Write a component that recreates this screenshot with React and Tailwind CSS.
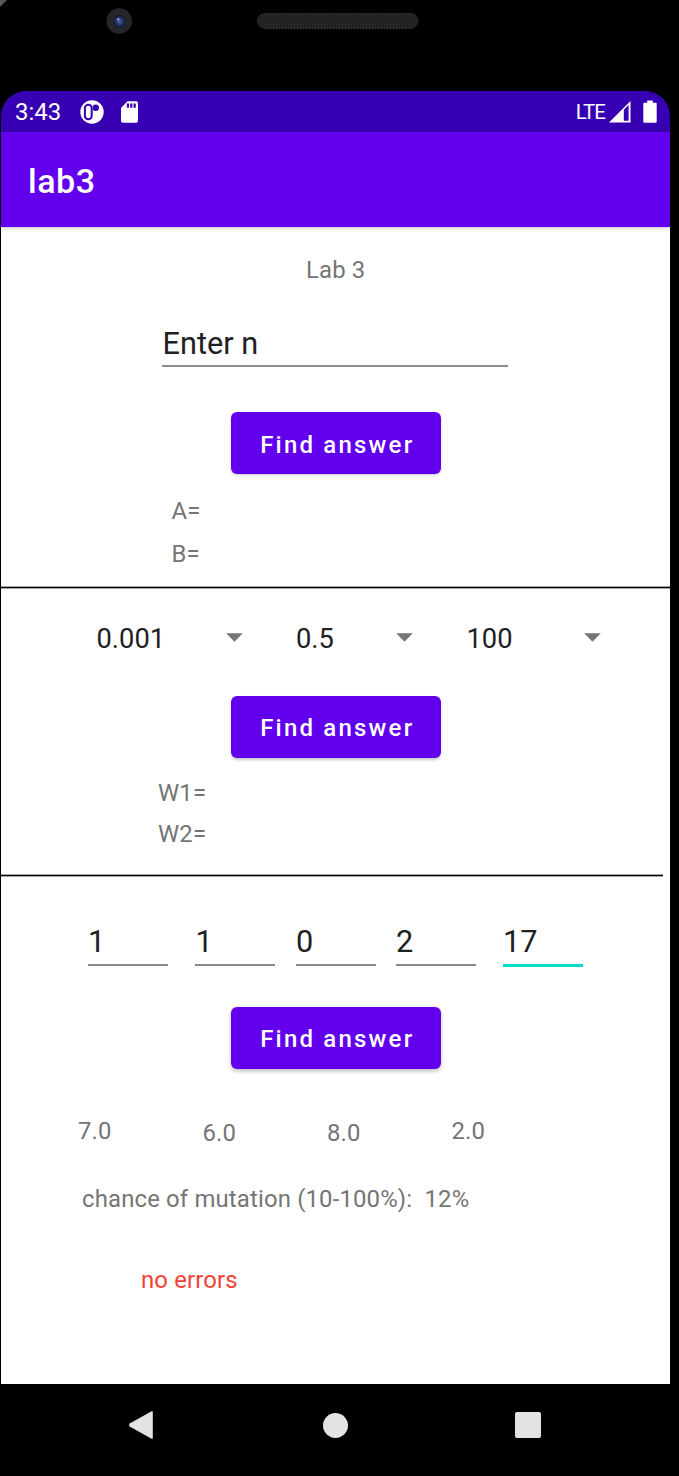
function StatusBar() {
  return (
    <div className="flex h-[41px] items-center rounded-t-[25px] bg-[#3700b3] pr-[13px] pl-[14px] text-white">
      <span className="mt-[1px] w-[46px] text-[24px] leading-[28px]">3:43</span>
      <svg className="ml-[19px] h-6 w-6" viewBox="0 0 24 24">
        <circle cx="12" cy="12" r="11.7" fill="#fff" />
        <rect x="4.9" y="4.7" width="6.8" height="14.6" rx="3.4" fill="none" stroke="#3700b3" strokeWidth="2" />
        <circle cx="15.8" cy="7.8" r="3.2" fill="#3700b3" />
      </svg>
      <svg className="ml-[17px] h-[22px] w-[17px]" viewBox="0 0 17 22">
        <path d="M6.5 0.3H15a2 2 0 0 1 2 2v17.4a2 2 0 0 1-2 2H2a2 2 0 0 1-2-2V7z" fill="#fff" />
        <path d="M5.8 2.4h2.2v4.4H5.8zM9.2 2.4h2.2v4.4H9.2zM12.6 2.4h2.2v4.4h-2.2z" fill="#3700b3" />
      </svg>
      <span className="ml-auto text-[20.5px] leading-[28px] tracking-[-1px]">LTE</span>
      <svg className="ml-[4px] h-[22px] w-[22px]" viewBox="0 0 22 22">
        <path d="M0 21.5L21.5 0v21.5z" fill="#fff" />
        <path d="M14.8 8.8L19.6 4v15.7h-4.8z" fill="#3700b3" />
      </svg>
      <svg className="ml-[12px] h-[23px] w-[14px]" viewBox="0 0 14 23">
        <path d="M4.2 0.5h5.6v2.2h2.9a1 1 0 0 1 1 1v17.8a1.2 1.2 0 0 1-1.2 1.2H1.5a1.2 1.2 0 0 1-1.2-1.2V3.7a1 1 0 0 1 1-1h2.9z" fill="#fff" />
      </svg>
    </div>
  );
}

function FindButton({ className }) {
  return (
    <button
      className={`ml-[230px] flex h-[62px] w-[210px] shrink-0 items-center justify-center rounded-[6px] bg-[#6200ee] pl-[2.5px] text-[24px] leading-[28px] font-medium tracking-[2.2px] text-white ${className}`}
    >
      Find answer
    </button>
  );
}

function Label({ children, className }) {
  return (
    <div className={`text-[23.9px] leading-[28px] tracking-[0.16px] whitespace-nowrap ${className}`}>{children}</div>
  );
}

function Spinner({ value, className }) {
  return (
    <div className={`flex h-8 items-center justify-between text-[27.3px] leading-8 text-[#212121] ${className}`}>
      <span>{value}</span>
      <svg className="mb-[4px] h-[9px] w-[17px]" viewBox="0 0 17 9">
        <path d="M0.2 0.3h16.6L8.5 8.7z" fill="#757575" />
      </svg>
    </div>
  );
}

function NumberField({ value, focused, className }) {
  return (
    <div className={`h-[46px] w-[80px] text-[30.7px] leading-[36px] text-[#212121] ${className}`}>
      <div className="h-[40px]">{value}</div>
      <div className={focused ? "h-[3px] bg-[#03dac5]" : "h-[2px] bg-[#898989]"} />
    </div>
  );
}

export default function App() {
  return (
    <div className="flex h-[1476px] w-[679px] flex-col overflow-hidden bg-black font-['Roboto',sans-serif]">
      <div className="flex h-[91px] items-start">
        <svg className="h-[91px] w-[679px]" viewBox="0 0 679 91">
          <defs>
            <pattern id="mesh" width="3" height="3" patternUnits="userSpaceOnUse">
              <rect width="3" height="3" fill="#1b1c1c" />
              <path d="M0 0h1v1H0zM1.5 1.5h1v1h-1z" fill="#383939" />
            </pattern>
            <radialGradient id="lens">
              <stop offset="0" stopColor="#4f64a0" />
              <stop offset="0.5" stopColor="#27386b" />
              <stop offset="1" stopColor="#141c38" />
            </radialGradient>
          </defs>
          <path d="M0 0h7L0 7z" fill="#55575d" />
          <circle cx="119.2" cy="21" r="12.8" fill="#252627" />
          <circle cx="119.5" cy="21.5" r="7.2" fill="#11141f" stroke="#33353c" strokeWidth="0.8" />
          <circle cx="119.5" cy="21.5" r="6.2" fill="url(#lens)" />
          <circle cx="118.2" cy="19.3" r="1.3" fill="#8795c6" />
          <rect x="257.5" y="13.5" width="160.5" height="15" rx="7.5" fill="url(#mesh)" stroke="#262727" />
        </svg>
      </div>

      <div className="ml-px flex h-[1293px] w-[669px] flex-col bg-white">
        <div className="bg-black">
          <StatusBar />
        </div>
        <div className="flex h-[95px] shrink-0 items-center bg-[#6200ee] pt-[3px] pl-[27px] text-[34.1px] leading-[40px] font-medium tracking-[0.5px] text-white shadow-[0_1px_4px_rgba(0,0,0,0.25)]">
          lab3
        </div>

        <Label className="mt-[29px] ml-[305px] text-[#757575]">Lab 3</Label>
        <div className="mt-[42px] ml-[161px] flex h-[41px] w-[346px] flex-col justify-between text-[30.7px] leading-[36px] text-[#212121]">
          <div className="pl-[0.5px]">Enter n</div>
          <div className="h-[2px] bg-[#8d8d8d]" />
        </div>
        <FindButton className="mt-[45px] pt-[3px] shadow-[0_1px_3px_rgba(0,0,0,0.22)]" />
        <Label className="mt-[23px] ml-[170.5px] text-[#757575]">A=</Label>
        <Label className="mt-[15px] ml-[170.5px] text-[#757575]">B=</Label>
        <div className="mt-[18px] h-[3px] shrink-0 border-y border-[#a6a6a6] bg-black" />

        <div className="mt-[34px] flex">
          <Spinner value="0.001" className="ml-[95.5px] w-[146.5px]" />
          <Spinner value="0.5" className="ml-[53px] w-[117px]" />
          <Spinner value="100" className="ml-[53.5px] w-[134.5px]" />
        </div>
        <FindButton className="mt-[41px] pt-[2px] shadow-[0_2px_3px_rgba(0,0,0,0.22)]" />
        <Label className="mt-[21px] ml-[157px] text-[#757575]">W1=</Label>
        <Label className="mt-[13px] ml-[157px] text-[#757575]">W2=</Label>
        <div className="mt-[26px] h-[3px] w-[662px] shrink-0 border-y border-[#a6a6a6] bg-black" />

        <div className="mt-[47px] flex">
          <NumberField value="1" className="ml-[87px]" />
          <NumberField value="1" className="ml-[27.4px]" />
          <NumberField value="0" className="ml-[20.6px]" />
          <NumberField value="2" className="ml-[20px]" />
          <NumberField value="17" focused className="ml-[27px]" />
        </div>
        <FindButton className="mt-[37px] pt-[2px] shadow-[0_2px_4px_rgba(0,0,0,0.28)]" />
        <div className="mt-[48px] flex h-[30px] text-[#757575]">
          <Label className="ml-[77px] w-[124.5px]">7.0</Label>
          <Label className="mt-[2px] w-[124.5px]">6.0</Label>
          <Label className="mt-[2px] w-[124.5px]">8.0</Label>
          <Label>2.0</Label>
        </div>
        <div className="mt-[38px] ml-[81px] flex text-[#757575]">
          <Label className="w-[342.5px]">chance of mutation (10-100%):</Label>
          <Label>12%</Label>
        </div>
        <Label className="mt-[53px] ml-[140px] text-[#f44336]">no errors</Label>
      </div>

      <div className="flex h-[84px] items-center pb-[2px] pl-[128px]">
        <svg className="h-[28px] w-[26px]" viewBox="0 0 26 28">
          <path d="M2 13.2L24 1v26L2 14.8z" fill="#e3e3e3" stroke="#e3e3e3" strokeWidth="1.6" strokeLinejoin="round" />
        </svg>
        <div className="ml-[169px] h-[25px] w-[25px] rounded-full bg-[#e3e3e3]" />
        <div className="ml-[167px] h-[26px] w-[26px] rounded-[2px] bg-[#e3e3e3]" />
      </div>
    </div>
  );
}
